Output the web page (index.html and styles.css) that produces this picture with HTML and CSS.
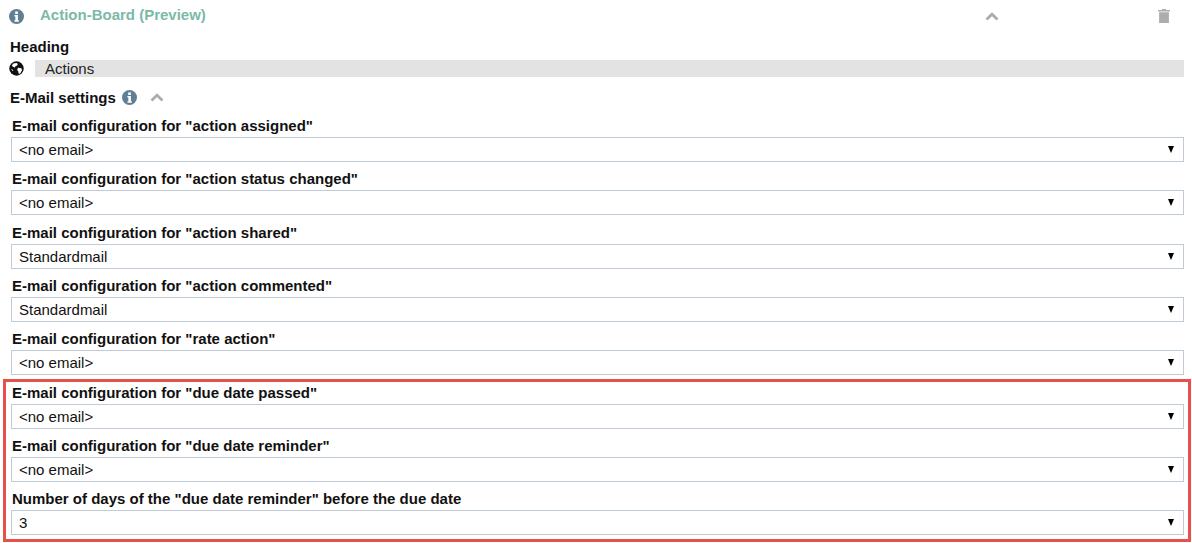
FILE: index.html
```html
<!DOCTYPE html>
<html lang="en">
<head>
<meta charset="utf-8">
<title>Action-Board</title>
<link rel="stylesheet" href="styles.css">
</head>
<body>
<main class="page">
  <header class="title-row">
    <svg class="icon-info" viewBox="0 0 16 16"><circle cx="8" cy="8" r="8" fill="#5f7f93"/><rect x="6.6" y="2.6" width="2.9" height="2.7" fill="#fff"/><path d="M5.8 6.4h3.7v5.500h1v1.600H5.800v-1.600h1v-3.900h-1z" fill="#fff"/></svg>
    <span class="title">Action-Board (Preview)</span>
    <svg class="chevron chevron-main" viewBox="0 0 14 9"><path d="M1.500 7.500 7 2.200l5.500 5.300" fill="none" stroke="#aeaca8" stroke-width="2.800"/></svg>
    <svg class="trash" viewBox="0 0 12 14"><path d="M4.200 0h3.600l.4 1H12v1.400H0V1h3.800zM1.100 3.300h9.800V14H1.100z" fill="#adadad"/></svg>
  </header>
  <div class="heading-label">Heading</div>
  <div class="lang-row">
    <svg class="globe" viewBox="0 0 16 16"><circle cx="8" cy="8" r="7.700" fill="#111"/><path d="M4.500 2.600 8 2l1.500 1.300-1.200 1.800-1.500.4-.4 1.500-1.700-.5-1.700-1.400zM9.500 7.200l3.700.6.700 2-1.800 3.300-1.600.7-.6-2.600-1.200-1.700zM2.300 8.500l1.700.7.600 1.500-1.100-.2z" fill="#fff"/></svg>
    <div class="lang-value">Actions</div>
  </div>
  <div class="section-row">
    <span class="section-title">E-Mail settings</span>
    <svg class="icon-info icon-small" viewBox="0 0 16 16"><circle cx="8" cy="8" r="8" fill="#5f7f93"/><rect x="6.6" y="2.6" width="2.9" height="2.7" fill="#fff"/><path d="M5.800 6.400h3.700v5.500h1v1.600H5.800v-1.600h1v-3.900h-1z" fill="#fff"/></svg>
    <svg class="chevron" viewBox="0 0 14 9"><path d="M1.500 7.500 7 2.200l5.500 5.300" fill="none" stroke="#aeaca8" stroke-width="2.800"/></svg>
  </div>
  <div class="fields">
    <div class="field"><label class="field-label">E-mail configuration for "action assigned"</label><div class="select"><span>&lt;no email&gt;</span><span class="caret"></span></div></div>
    <div class="field"><label class="field-label">E-mail configuration for "action status changed"</label><div class="select"><span>&lt;no email&gt;</span><span class="caret"></span></div></div>
    <div class="field"><label class="field-label">E-mail configuration for "action shared"</label><div class="select"><span>Standardmail</span><span class="caret"></span></div></div>
    <div class="field"><label class="field-label">E-mail configuration for "action commented"</label><div class="select"><span>Standardmail</span><span class="caret"></span></div></div>
    <div class="field"><label class="field-label">E-mail configuration for "rate action"</label><div class="select"><span>&lt;no email&gt;</span><span class="caret"></span></div></div>
    <div class="field"><label class="field-label">E-mail configuration for "due date passed"</label><div class="select"><span>&lt;no email&gt;</span><span class="caret"></span></div></div>
    <div class="field"><label class="field-label">E-mail configuration for "due date reminder"</label><div class="select"><span>&lt;no email&gt;</span><span class="caret"></span></div></div>
    <div class="field"><label class="field-label">Number of days of the "due date reminder" before the due date</label><div class="select"><span>3</span><span class="caret"></span></div></div>
  </div>
  <div class="highlight"></div>
</main>
</body>
</html>
```

FILE: styles.css
```css
* { box-sizing: border-box; }
html, body { margin: 0; padding: 0; background: #fff; }
body {
  width: 1192px;
  height: 543px;
  overflow: hidden;
  font-family: "Liberation Sans", Arial, sans-serif;
  font-size: 15px;
  color: #111;
}
.page { position: relative; height: 543px; padding: 7px 8px 0 9px; }
.title-row { display: flex; align-items: center; height: 18px; }
.icon-info { width: 15px; height: 15px; flex: none; }
.title { margin-left: 16px; font-weight: bold; color: #7bb9a8; line-height: 16px; margin-bottom: 2px; }
.chevron { width: 14px; height: 9px; flex: none; }
.chevron-main { margin-left: 779px; }
.trash { width: 12px; height: 14px; margin-left: 159px; flex: none; }
.heading-label { margin-top: 13px; height: 18px; line-height: 18px; font-weight: bold; padding-left: 1px; }
.lang-row { display: flex; align-items: center; height: 17px; margin-top: 4px; }
.globe { width: 15px; height: 15px; flex: none; }
.lang-value { flex: 1; margin-left: 11px; height: 17px; line-height: 18px; padding-left: 10px; background: #e3e3e3; color: #222; }
.section-row { display: flex; align-items: center; height: 18px; margin-top: 11px; padding-left: 1px; }
.section-title { font-weight: bold; }
.icon-small { margin-left: 6px; }
.section-row .chevron { margin-left: 13px; }
.fields { margin-top: 10.2px; padding-left: 2px; display: flex; flex-direction: column; gap: 7.3px; }
.field { display: flex; flex-direction: column; height: 46px; }
.field-label { height: 21px; line-height: 20px; font-weight: bold; padding-left: 1px; }
.select {
  display: flex;
  align-items: center;
  justify-content: space-between;
  height: 25px;
  border: 1px solid #bfcbd6;
  padding: 0 9px 0 7px;
  background: #fff;
}
.caret { width: 0; height: 0; border-left: 3.500px solid transparent; border-right: 3.500px solid transparent; border-top: 7px solid #000; }
.highlight { position: absolute; left: 3px; top: 379px; width: 1188px; height: 163px; border: 3px solid #e8504b; pointer-events: none; }
```
